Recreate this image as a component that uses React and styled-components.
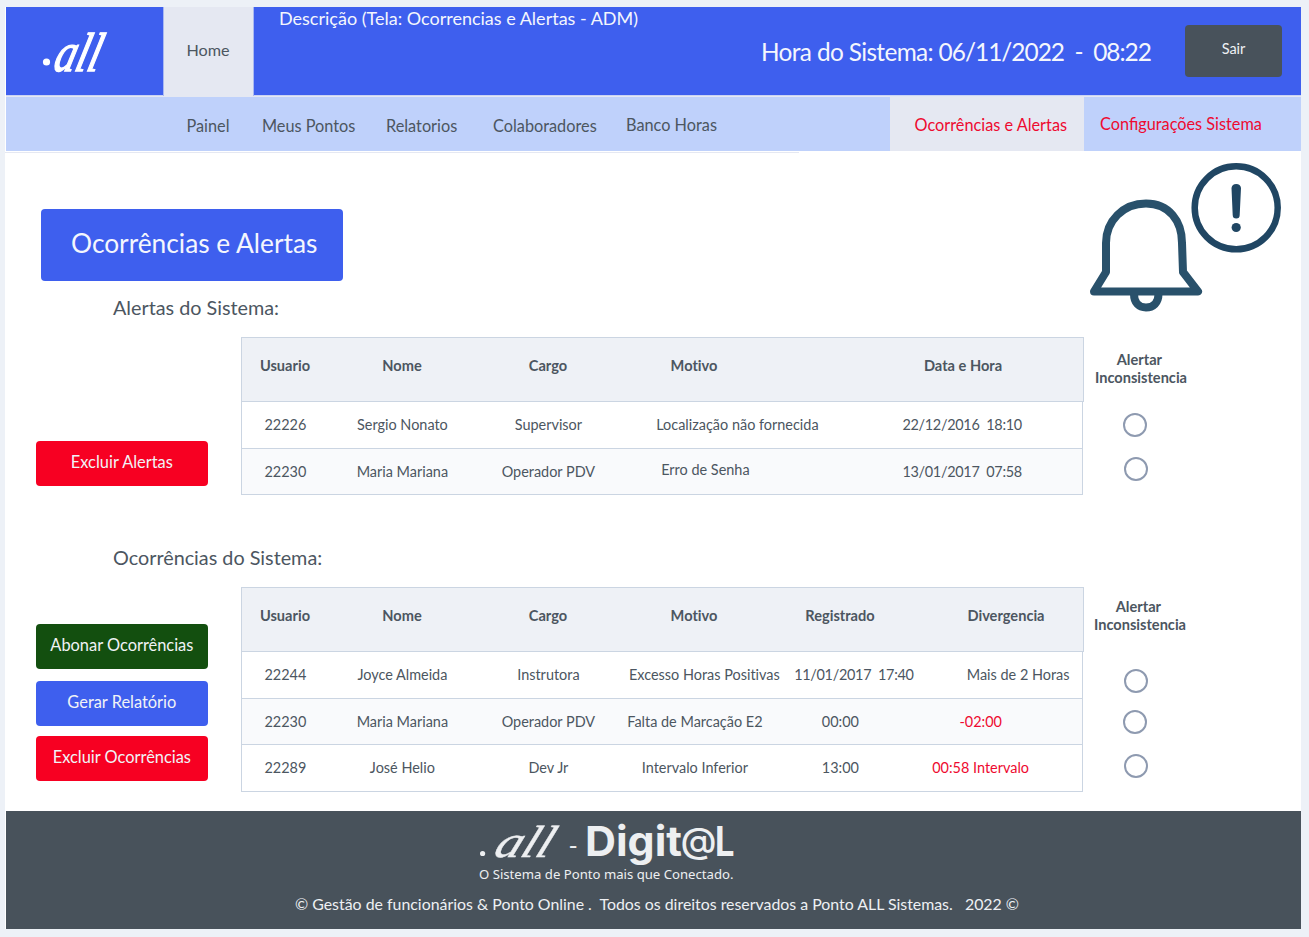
import React from 'react';
import styled, { createGlobalStyle } from 'styled-components';

const Global = createGlobalStyle`
  *, *::before, *::after { box-sizing: border-box; }
  body {
    margin: 0;
    background: #edf1f7;
    font-family: Lato, "Liberation Sans", sans-serif;
    color: #4c5661;
  }
  button { font-family: inherit; border: 0; padding: 0; }
`;

const Frame = styled.div`
  width: 1296px;
  margin: 7px 0 8px 5px;
  background: #fff;
`;

const Header = styled.header`
  margin-left: 1px;
  height: 89px;
  display: flex;
  background: #3e5fee;
  color: #f4f6fd;
  border-bottom: 1px solid #c9d3f4;
  white-space: pre;
`;

const Brand = styled.div`
  width: 157px;
`;

const HomeTab = styled.a`
  width: 91px;
  height: 89px;
  border: solid #a9b8f2;
  border-width: 0 1px;
  background: #e5e8f2;
  color: #4c5661;
  font-size: 16.2px;
  line-height: 86px;
  padding-right: 1px;
  text-align: center;
`;

const Description = styled.div`
  margin-left: 25px;
  width: 482px;
  font-size: 18px;
  line-height: 22px;
`;

const Clock = styled.div`
  width: 424px;
  font-size: 24.4px;
  line-height: 90px;
  letter-spacing: -0.64px;
`;

const Time = styled.span`
  letter-spacing: -0.98px;
`;

const Exit = styled.button`
  width: 97px;
  height: 52px;
  margin-top: 18.4px;
  padding-bottom: 6px;
  border-radius: 4px;
  background: #48525b;
  color: #eef0f4;
  font-size: 14.5px;
`;

const Nav = styled.nav`
  margin-left: 1px;
  height: 55px;
  display: flex;
  background: #bfd1fb;
  border-top: 1px solid #e5e8f2;
  font-size: 16.3px;
  white-space: nowrap;
`;

const NavItem = styled.a`
  width: ${p => p.$w}px;
  padding-left: ${p => p.$pad || 0}px;
  line-height: ${p => p.$lh || 57}px;
  color: ${p => (p.$alert ? '#ee0a30' : 'inherit')};
  background: ${p => (p.$active ? '#e5e8f2' : 'transparent')};
  &:first-child { margin-left: 180.5px; }
`;

const NavRule = styled.div`
  width: 794px;
  height: 2px;
  border-bottom: 1px solid #e5e8f2;
`;

const Main = styled.main`
  height: 658px;
`;

const Hero = styled.div`
  display: flex;
  justify-content: space-between;
  height: 135px;
  padding: 9px 19px 0 36px;
`;

const Title = styled.h1`
  width: 302px;
  height: 72px;
  margin: 47.4px 0 0;
  padding-left: 30px;
  border-radius: 4px;
  background: #3e5fee;
  color: #f4f6fd;
  font-size: 26.3px;
  font-weight: 400;
  line-height: 68px;
`;

const Subtitle = styled.h2`
  height: 49px;
  margin: 0 0 0 108px;
  font-size: 19.8px;
  font-weight: 400;
  line-height: 38px;
`;

const Section = styled.section`
  display: flex;
  height: ${p => p.$h}px;
`;

const Actions = styled.div`
  width: 236px;
  padding: ${p => p.$top}px 0 0 30.6px;
`;

const Action = styled.button`
  display: block;
  width: 172.500px;
  height: 45px;
  margin-bottom: ${p => p.$gap || 0}px;
  padding-bottom: 4px;
  border-radius: 4px;
  background: ${p => p.$bg};
  color: #f1f3f6;
  font-size: 16.4px;
`;

const Table = styled.div`
  width: 843px;
  font-variant-ligatures: no-common-ligatures;
`;

const Row = styled.div`
  display: grid;
  grid-template-columns: ${p => p.$cols};
  width: 841.5px;
  height: 46.6px;
  margin-left: 0.4px;
  border: solid #cbd5e2;
  border-width: 0 1px 1px;
  background: ${p => (p.$alt ? '#f9fafc' : '#fff')};
  font-size: 14.45px;
`;

const HeadRow = styled(Row)`
  width: 843px;
  height: 65px;
  margin: 0;
  padding-bottom: 8px;
  border: 1px solid #cbd5e2;
  background: #eef1f6;
  font-size: 14.6px;
  font-weight: 700;
`;

const Cell = styled.div`
  display: flex;
  align-items: center;
  justify-content: center;
  min-width: 0;
  margin-left: ${p => (p.$shift || 0) * 2}px;
  padding-bottom: ${p => (p.$lift || 0) * 2}px;
  color: ${p => (p.$red ? '#ee0a30' : 'inherit')};
  letter-spacing: ${p => (p.$tight ? '-0.3px' : 'normal')};
  white-space: pre;
  &:first-child { padding-right: 1px; }
`;

const Checks = styled.div`
  display: flex;
  flex-direction: column;
  align-items: center;
  width: 114px;
  padding-top: ${p => p.$top}px;
`;

const ChecksLabel = styled.div`
  margin-bottom: ${p => p.$gap}px;
  padding-right: ${p => p.$right || 0}px;
  font-size: 14.6px;
  font-weight: 700;
  line-height: 18px;
  text-align: center;
`;

const Radio = styled.input.attrs({ type: 'radio' })`
  appearance: none;
  flex: none;
  width: 24px;
  height: 24px;
  margin: 0 ${p => p.$right || 11}px ${p => p.$gap || 0}px 0;
  border: 2px solid #8e9ab0;
  border-radius: 50%;
  background: #fff;
`;

const Footer = styled.footer`
  display: flex;
  flex-direction: column;
  align-items: center;
  margin-left: 1px;
  height: 118px;
  background: #48525b;
  color: #eef0f3;
`;

const Copyright = styled.div`
  margin-left: 7px;
  font-size: 15.88px;
  line-height: 22px;
  white-space: pre;
`;

const FooterArt = styled.svg`
  display: block;
  margin-right: 95px;
`;

const HeaderLogo = () => (
  <svg width="157" height="88" viewBox="6 7 157 88" fill="#fff">
    <circle cx="46.5" cy="62" r="3.6" />
    <text transform="translate(52 71) skewX(-15) scale(1 1.1)" fontFamily="Liberation Serif" fontStyle="italic" fontSize="50" stroke="#fff" strokeWidth="1.300" textLength="45" lengthAdjust="spacingAndGlyphs">all</text>
  </svg>
);

const AlertArt = () => (
  <svg width="192" height="150" viewBox="1090 162 192 150" fill="none" strokeLinejoin="round">
    <g stroke="#29516b" strokeWidth="8">
      <path d="M1094 291.5 L1106 272 V243 C1106 221 1123 203.500 1146 203.500 C1169 203.500 1182 221 1182 243 L1183 272 L1198 291.500 Z" />
      <path d="M1134 294 C1134 303 1139 307.500 1146 307.500 C1153 307.500 1158.500 303 1158.500 294" />
    </g>
    <circle cx="1236.200" cy="207.800" r="41.500" stroke="#204663" strokeWidth="6.500" />
    <path d="M1231.500 188 A4.800 4.800 0 0 1 1241 188 L1239.700 215 A3.500 3.500 0 0 1 1232.700 215 Z" fill="#204663" />
    <circle cx="1236.200" cy="227.500" r="4.600" fill="#204663" />
  </svg>
);

const FooterLogo = () => (
  <FooterArt width="264" height="82" viewBox="474 811 264 82" fill="#edeff1">
    <circle cx="482.600" cy="853.500" r="2.600" />
    <text transform="translate(492 856.500) skewX(-22)" fontFamily="Liberation Serif" fontStyle="italic" fontSize="45" stroke="#edeff1" strokeWidth="0.400" textLength="56" lengthAdjust="spacingAndGlyphs">all</text>
    <text x="568.500" y="855" fontFamily="Lato" fontSize="25">-</text>
    <g fontFamily="Inter" fontWeight="700" fontSize="41">
      <text x="585" y="856" textLength="97" lengthAdjust="spacingAndGlyphs">Digit</text>
      <text x="680.500" y="852.500" fontSize="35" fontWeight="500" textLength="36" lengthAdjust="spacingAndGlyphs">@</text>
      <text x="715" y="856" textLength="19.500" lengthAdjust="spacingAndGlyphs">L</text>
    </g>
    <text x="479" y="878.500" fontFamily="Noto Sans" fontSize="13.100" textLength="254.500" lengthAdjust="spacingAndGlyphs">O Sistema de Ponto mais que Conectado.</text>
  </FooterArt>
);

const alertCols = '87px 146px 146px 146px 1fr';
const eventCols = '87px 146px 146px 146px 146px 1fr';

const alerts = [
  ['22226', 'Sergio Nonato', 'Supervisor', { t: 'Localização não fornecida', s: 43 }, { t: '22/12/2016  18:10', s: 37.5, tight: true }],
  ['22230', 'Maria Mariana', 'Operador PDV', { t: 'Erro de Senha', s: 11, lift: 2 }, { t: '13/01/2017  07:58', s: 37.5, tight: true }],
];

const events = [
  ['22244', 'Joyce Almeida', 'Instrutora', { t: 'Excesso Horas Positivas', s: 10 }, { t: '11/01/2017  17:40', s: 13.5, tight: true }, { t: 'Mais de 2 Horas', s: 20.5 }],
  ['22230', 'Maria Mariana', 'Operador PDV', { t: 'Falta de Marcação E2', s: 0.5 }, '00:00', { t: '-02:00', s: -17, red: true }],
  ['22289', 'José Helio', 'Dev Jr', { t: 'Intervalo Inferior', s: 0.5 }, '13:00', { t: '00:58 Intervalo', s: -17, red: true }],
];

const Cells = ({ items }) =>
  items.map((c, i) => {
    const d = typeof c === 'string' ? { t: c } : c;
    return <Cell key={i} $shift={d.s} $lift={d.lift} $red={d.red} $tight={d.tight}>{d.t}</Cell>;
  });

const DataTable = ({ cols, head, rows }) => (
  <Table>
    <HeadRow $cols={cols}><Cells items={head} /></HeadRow>
    {rows.map((r, i) => (
      <Row key={i} $cols={cols} $alt={i % 2 === 1}><Cells items={r} /></Row>
    ))}
  </Table>
);

export default function App() {
  return (
    <>
      <Global />
      <Frame>
        <Header>
          <Brand><HeaderLogo /></Brand>
          <HomeTab>Home</HomeTab>
          <Description>Descrição (Tela: Ocorrencias e Alertas - ADM)</Description>
          <Clock>Hora do Sistema: <Time>06/11/2022  -  08:22</Time></Clock>
          <Exit>Sair</Exit>
        </Header>
        <Nav>
          <NavItem $w={75.5}>Painel</NavItem>
          <NavItem $w={124}>Meus Pontos</NavItem>
          <NavItem $w={107}>Relatorios</NavItem>
          <NavItem $w={133}>Colaboradores</NavItem>
          <NavItem $w={264} $lh={56}>Banco Horas</NavItem>
          <NavItem $w={194} $pad={24.5} $lh={56} $alert $active>Ocorrências e Alertas</NavItem>
          <NavItem $w={217} $pad={16} $lh={54} $alert>Configurações Sistema</NavItem>
        </Nav>
        <NavRule />
        <Main>
          <Hero>
            <Title>Ocorrências e Alertas</Title>
            <AlertArt />
          </Hero>
          <Subtitle>Alertas do Sistema:</Subtitle>
          <Section $h={201}>
            <Actions $top={104}>
              <Action $bg="#f70022">Excluir Alertas</Action>
            </Actions>
            <DataTable
              cols={alertCols}
              head={['Usuario', 'Nome', 'Cargo', 'Motivo', { t: 'Data e Hora', s: 38 }]}
              rows={alerts}
            />
            <Checks $top={14}>
              <ChecksLabel $gap={26}>Alertar&nbsp;<br />Inconsistencia</ChecksLabel>
              <Radio $right={13} $gap={20} />
              <Radio />
            </Checks>
          </Section>
          <Subtitle>Ocorrências do Sistema:</Subtitle>
          <Section $h={224}>
            <Actions $top={37}>
              <Action $bg="#134f0f" $gap={12}>Abonar Ocorrências</Action>
              <Action $bg="#3e5fee" $gap={10}>Gerar Relatório</Action>
              <Action $bg="#f70022">Excluir Ocorrências</Action>
            </Actions>
            <DataTable
              cols={eventCols}
              head={['Usuario', 'Nome', 'Cargo', 'Motivo', 'Registrado', { t: 'Divergencia', s: 8 }]}
              rows={events}
            />
            <Checks $top={11}>
              <ChecksLabel $gap={34.5} $right={2}>Alertar&nbsp;<br />Inconsistencia</ChecksLabel>
              <Radio $gap={17} />
              <Radio $right={13} $gap={20} />
              <Radio />
            </Checks>
          </Section>
        </Main>
        <Footer>
          <FooterLogo />
          <Copyright>{'© Gestão de funcionários & Ponto Online .  Todos os direitos reservados a Ponto ALL Sistemas.   2022 ©'}</Copyright>
        </Footer>
      </Frame>
    </>
  );
}
